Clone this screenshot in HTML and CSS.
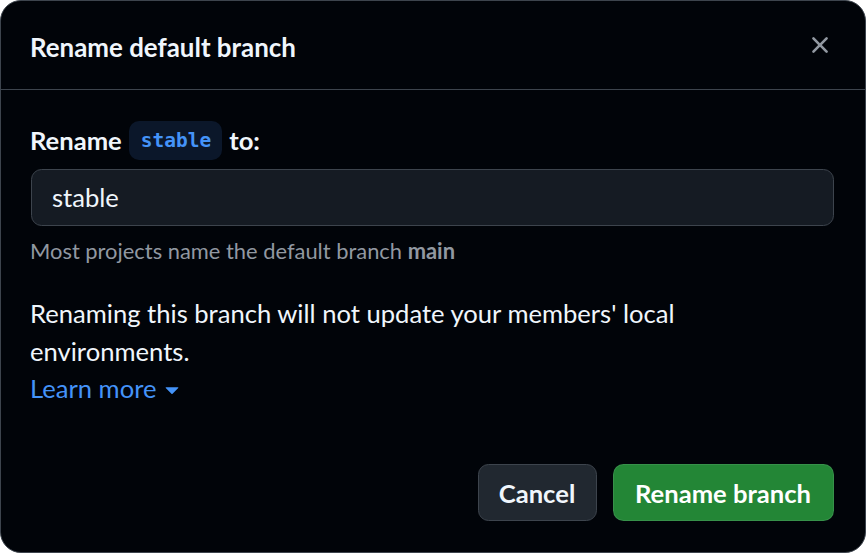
FILE: index.html
```html
<!DOCTYPE html>
<html lang="en">
<head>
<meta charset="utf-8">
<title>Rename default branch</title>
<link rel="stylesheet" href="styles.css">
</head>
<body>
<div class="dialog" role="dialog" aria-labelledby="dlg-title">
  <header class="dialog-header">
    <h1 class="dialog-title" id="dlg-title">Rename default branch</h1>
    <button class="close-btn" aria-label="Close">
      <svg width="28" height="28" viewBox="0 0 16 16" aria-hidden="true"><path fill="currentColor" d="M3.72 3.72a.75.75 0 0 1 1.06 0L8 6.94l3.22-3.22a.749.749 0 0 1 1.275.326.749.749 0 0 1-.215.734L9.06 8l3.22 3.22a.749.749 0 0 1-.326 1.275.749.749 0 0 1-.734-.215L8 9.060l-3.22 3.22a.751.751 0 0 1-1.042-.018.751.751 0 0 1-.018-1.042L6.94 8 3.72 4.78a.75.75 0 0 1 0-1.06Z"/></svg>
    </button>
  </header>
  <div class="dialog-body">
    <label class="field-label" for="branch">Rename <code class="branch-name">stable</code> to:</label>
    <input class="text-input" id="branch" type="text" value="stable">
    <p class="caption">Most projects name the default branch <strong>main</strong></p>
    <p class="notice">Renaming this branch will not update your members' local environments.</p>
    <a class="learn-more" href="#">Learn more <svg width="28" height="28" viewBox="0 0 16 16" aria-hidden="true"><path fill="currentColor" d="m4.427 7.427 3.396 3.396a.25.25 0 0 0 .354 0l3.396-3.396A.25.25 0 0 0 11.396 7H4.604a.25.25 0 0 0-.177.427Z"/></svg></a>
  </div>
  <footer class="dialog-footer">
    <button class="btn btn-default">Cancel</button>
    <button class="btn btn-primary">Rename branch</button>
  </footer>
</div>
</body>
</html>
```
FILE: styles.css
```css
html, body {
  margin: 0;
  padding: 0;
  background: #ffffff;
}

body {
  font-family: Lato, "Segoe UI", "Noto Sans", sans-serif;
  color: #f0f6fc;
}

.dialog {
  box-sizing: border-box;
  width: 866px;
  height: 553px;
  background: #010409;
  border: 1.75px solid #3d444d;
  border-radius: 21px;
  display: flex;
  flex-direction: column;
  overflow: hidden;
}

.dialog-header {
  height: 87.5px;
  border-bottom: 1.75px solid #3d444d;
  display: flex;
  align-items: center;
  justify-content: space-between;
  padding: 0 17px 0 29px;
  flex-shrink: 0;
}

.dialog-title {
  margin: 0;
  font-size: 25.9px;
  font-weight: 700;
  line-height: 1.5;
  color: #f0f6fc;
  position: relative;
  top: 3px;
}

.close-btn {
  width: 56px;
  height: 56px;
  border: 0;
  background: transparent;
  color: #9198a1;
  padding: 0;
  display: flex;
  align-items: center;
  justify-content: center;
}

.dialog-body {
  padding: 31px 29px 0 29px;
  display: flex;
  flex-direction: column;
  align-items: flex-start;
}

.field-label {
  font-size: 25.6px;
  font-weight: 700;
  line-height: 39px;
  display: flex;
  align-items: center;
  gap: 7px;
}

.branch-name {
  font-family: "DejaVu Sans Mono", "Liberation Mono", monospace;
  font-size: 19.5px;
  font-weight: 700;
  color: #4493f8;
  background: #0b172a;
  border-radius: 10px;
  padding: 0 11px 0 12px;
  height: 39px;
  line-height: 39px;
}

.text-input {
  box-sizing: border-box;
  margin-top: 9px;
  width: 803px;
  margin-left: 1px;
  height: 57px;
  background: #151b23;
  border: 1.75px solid #3d444d;
  border-radius: 10.5px;
  color: #f0f6fc;
  font-family: inherit;
  font-size: 25.6px;
  padding: 0 20px;
  outline: none;
}

.caption {
  margin: 9px 0 0 0;
  font-size: 21.9px;
  line-height: 31.5px;
  color: #9198a1;
}

.caption strong {
  font-weight: 700;
}

.notice {
  margin: 29px 0 0 0;
  max-width: 720px;
  font-size: 25.6px;
  line-height: 37.5px;
}

.learn-more {
  font-size: 25.6px;
  line-height: 37.5px;
  color: #4493f8;
  text-decoration: none;
  display: inline-flex;
  align-items: center;
  gap: 2px;
}

.dialog-footer {
  margin-top: auto;
  display: flex;
  justify-content: flex-end;
  gap: 16px;
  padding: 0 31.5px 31px 29px;
}

.btn {
  box-sizing: border-box;
  height: 57px;
  border-radius: 10.5px;
  font-family: inherit;
  font-size: 25.6px;
  font-weight: 700;
  padding: 0 10px;
  color: #f0f6fc;
  cursor: pointer;
}

.btn-default {
  background: #212830;
  border: 1.75px solid #3d444d;
  width: 119px;
}

.btn-primary {
  background: #238636;
  border: 1.75px solid rgba(240, 246, 252, 0.1);
  color: #ffffff;
  width: 221px;
}
```
